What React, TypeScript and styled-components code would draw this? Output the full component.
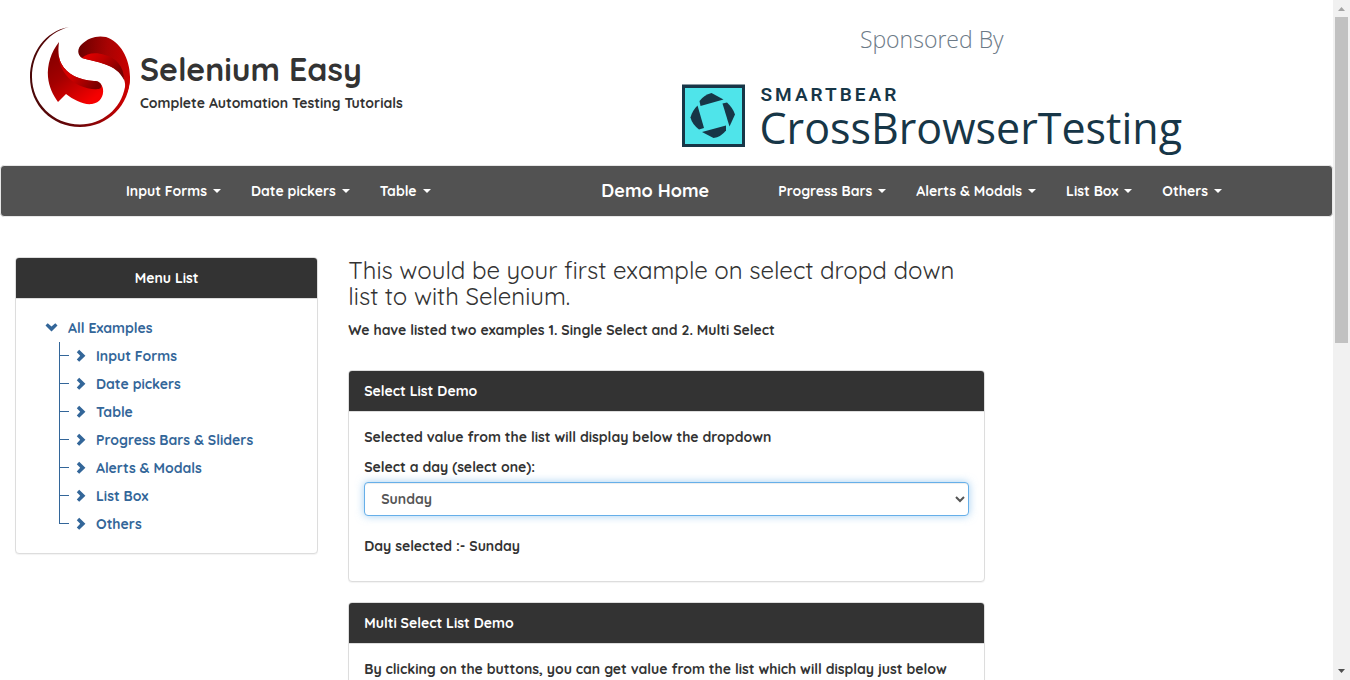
import React, { useState } from 'react';
import styled, { createGlobalStyle, css } from 'styled-components';

const GlobalStyle = createGlobalStyle`
  *, *::before, *::after { box-sizing: border-box; }
  body {
    margin: 0;
    background: #fff;
    color: #333;
    font: 700 14px/20px Quicksand, Inter, "Liberation Sans", sans-serif;
  }
  h1, h3, p, ul { margin: 0; padding: 0; font-weight: inherit; }
  ul { list-style: none; }
  a { color: inherit; text-decoration: none; }
`;

const Shell = styled.div`
  display: grid;
  grid-template-columns: minmax(0, 1fr) 17px;
  height: 100vh;
  overflow: hidden;
`;

const Page = styled.div`
  min-width: 0;
  overflow: hidden;
`;

const ScrollTrack = styled.div`
  display: flex;
  flex-direction: column;
  align-items: center;
  background: #f1f1f1;
`;

const ScrollArrow = styled.svg`
  display: block;
  flex: none;
  width: 17px;
  height: 17px;
`;

const ScrollThumb = styled.div`
  width: 13px;
  height: 48%;
  flex: none;
  background: #c1c1c1;
`;

const ScrollSpace = styled.div`
  flex: 1;
`;

const Header = styled.header`
  display: grid;
  grid-template-columns: 1fr 1fr;
  height: 165px;
`;

const Brand = styled.a`
  display: flex;
  align-items: flex-start;
  gap: 10px;
  padding: 27px 0 0 30px;
`;

const BrandText = styled.div`
  padding-top: 24px;
`;

const BrandTitle = styled.h1`
  margin-bottom: 6px;
  font-size: 32px;
  line-height: 36px;
  font-weight: 700;
`;

const Sponsor = styled.div`
  display: flex;
  flex-direction: column;
  align-items: flex-start;
  padding: 24px 15px 0;
  font-family: "Open Sans", "Noto Sans", sans-serif;
  color: #173647;
`;

const SponsorInner = styled.a`
  display: grid;
  justify-items: center;
  gap: 30px;
`;

const SponsorCaption = styled.span`
  font-size: 23px;
  line-height: 30px;
  font-weight: 300;
  color: #6c7a87;
`;

const SponsorLogo = styled.span`
  display: flex;
  gap: 15px;
`;

const SponsorNames = styled.span`
  display: flex;
  flex-direction: column;
`;

const SponsorCompany = styled.span`
  padding-left: 1px;
  font-family: Roboto, "Open Sans", sans-serif;
  font-size: 19px;
  line-height: 22px;
  font-weight: 600;
  letter-spacing: 3px;
`;

const SponsorProduct = styled.span`
  font-size: 43px;
  line-height: 44px;
  font-weight: 400;
`;

const NavBar = styled.nav`
  display: flex;
  align-items: center;
  min-height: 52px;
  padding: 0 95px 0 110px;
  margin-bottom: 40px;
  border: 1px solid #e7e7e7;
  border-radius: 4px;
  background: #525252;
  color: #fff;
`;

const NavGroup = styled.ul`
  display: flex;
`;

const NavLink = styled.a`
  display: flex;
  align-items: center;
  gap: 6px;
  padding: 15px;
  white-space: nowrap;
`;

const HomeLink = styled.a`
  margin: 0 39px 0 auto;
  padding: 15px;
  font-size: 18px;
  white-space: nowrap;
`;

const Caret = styled.span`
  border-top: 4px solid currentColor;
  border-left: 4px solid transparent;
  border-right: 4px solid transparent;
`;

const Columns = styled.div`
  display: grid;
  grid-template-columns: 1fr 2fr 1fr;
  align-items: start;
`;

const Column = styled.div`
  min-width: 0;
  padding: 0 15px;
`;

const Panel = styled.section`
  margin-bottom: 20px;
  border: 1px solid #ddd;
  border-radius: 4px;
  background: #fff;
  box-shadow: 0 1px 1px rgba(0, 0, 0, 0.05);
`;

const PanelHeading = styled.div<{ $centered?: boolean }>`
  padding: 10px 15px;
  border-bottom: 1px solid #ddd;
  border-radius: 3px 3px 0 0;
  background: #333;
  color: #fff;
  text-align: ${(p) => (p.$centered ? 'center' : 'left')};
`;

const PanelBody = styled.div`
  padding: 15px;
`;

const Tree = styled.div`
  padding-left: 14px;
  color: #369;
`;

const TreeLink = styled.a`
  display: flex;
  align-items: center;
  height: 28px;
`;

const TreeRoot = styled(TreeLink)`
  gap: 9px;
`;

const TreeList = styled.ul`
  padding-left: 14px;
`;

const TreeItem = styled.li`
  display: flex;
`;

const TreeLeaf = styled(TreeLink)`
  gap: 7px;
  padding-left: 7px;
`;

const Branch = styled.span<{ $last: boolean }>`
  width: 10px;
  &::before, &::after {
    content: '';
    display: block;
    height: 14px;
    border-left: 1px solid #369;
  }
  &::before { border-bottom: 1px solid #369; }
  ${(p) => p.$last && css`&::after { border-left-color: transparent; }`}
`;

const Lead = styled.h3`
  margin-bottom: 11px;
  font-size: 24px;
  line-height: 26px;
  font-weight: 400;
`;

const Intro = styled.p`
  margin-bottom: 30px;
`;

const Text = styled.p`
  margin-bottom: 10px;
`;

const Field = styled.div`
  display: grid;
  gap: 5px;
  margin-bottom: 20px;
`;

const Select = styled.select`
  width: 100%;
  height: 34px;
  padding: 6px 12px;
  border: 1px solid #66afe9;
  border-radius: 4px;
  outline: 0;
  background: #fff;
  color: #555;
  font: inherit;
  box-shadow: inset 0 1px 1px rgba(0, 0, 0, 0.075), 0 0 8px rgba(102, 175, 233, 0.6);
`;

const SeleniumLogo = () => (
  <svg width="100" height="100" viewBox="0 0 100 100" aria-hidden="true">
    <defs>
      <linearGradient id="ring" x1="0" y1="0" x2="1" y2="0">
        <stop offset="0" stopColor="#4a0808" />
        <stop offset="0.5" stopColor="#6e0508" />
        <stop offset="1" stopColor="#d60000" />
      </linearGradient>
      <linearGradient id="hook" x1="0" y1="0.3" x2="1" y2="0.4">
        <stop offset="0" stopColor="#6d0000" />
        <stop offset="0.55" stopColor="#a80303" />
        <stop offset="1" stopColor="#c80000" />
      </linearGradient>
      <linearGradient id="band" x1="0" y1="0" x2="1" y2="0.6">
        <stop offset="0" stopColor="#e80000" />
        <stop offset="0.45" stopColor="#c00000" />
        <stop offset="1" stopColor="#760000" />
      </linearGradient>
      <linearGradient id="wing" x1="0" y1="0" x2="0.7" y2="1">
        <stop offset="0" stopColor="#780000" />
        <stop offset="0.5" stopColor="#a30000" />
        <stop offset="1" stopColor="#f60000" />
      </linearGradient>
      <linearGradient id="fold" x1="0" y1="0" x2="1" y2="0.8">
        <stop offset="0" stopColor="#b80000" />
        <stop offset="0.5" stopColor="#d90000" />
        <stop offset="1" stopColor="#7c0000" />
      </linearGradient>
    </defs>
    <path fill="url(#ring)" d="M39 0C15 4 0 26 0 50c0 28 22 50 50 50s50-22 50-50l-5-4c1 5 1 9 0 14-4 22-23 37.500-45 37.500C23 97.500 2 76 2 50 2 27 16 6 39 0z" />
    <path fill="url(#hook)" d="M52 31c-5-3-5-10 0-14 6-6 15-9 24-7 14 4 24 22 24 40 0 8-2 15-6 22 2-8 2-16-1-22-7-13-27-15-41-19z" />
    <path fill="url(#band)" d="M52 31c5-5 14-6 23-3 11 3 19 11 19 25-7-16-28-18-42-22z" />
    <path fill="url(#wing)" d="M29 15c-8 10-12 23-11 35 1 10 5 18 10 25l8-8c8 6 17 11 26 10 8-1 12-8 11-15-1-5-4-8-9-8-14-1-27-6-33-18-3-7-3-13-2-21z" />
    <path fill="url(#fold)" d="M29 15c-2 14 0 24 7 33 8 10 21 15 33 14 3-1 3-4 1-6-2-2-4-2-6-2-14-1-27-6-33-18-3-7-3-13-2-21z" />
  </svg>
);

const ApertureLogo = () => (
  <svg width="63" height="63" viewBox="0 0 63 63" aria-hidden="true">
    <rect y="0.500" width="63" height="62.500" fill="#173647" />
    <rect x="3" y="4" width="57" height="56" fill="#4fe4ea" />
    <g fill="#173647">
      <path d="M29.500 9 41.500 15.500 18.500 22 17.500 17Q22 11 29.500 9Z" />
      <path d="M40.500 19.500 45 18.500Q51 24 53 30.500L47.500 42.500Z" />
      <path d="M20 48 44 41.500v5Q39 53 31.500 54Z" />
      <path d="M15.500 21.500 22 44 17 45.500Q10 40 8.500 33.500Q10 27 15.500 21.500Z" />
    </g>
  </svg>
);

const ChevronDown = () => (
  <svg width="14" height="14" viewBox="0 0 14 14" fill="currentColor" aria-hidden="true">
    <path d="M.5 4.500 2.700 2.300 6.500 5.500l3.800-3.200 2.200 2.200-6 6z" />
  </svg>
);

const ChevronRight = () => (
  <svg width="13" height="14" viewBox="0 0 13 14" fill="currentColor" aria-hidden="true">
    <path d="M.8 3.200 3.200.8l6.200 6-6.200 6L.8 10.400 4.200 6.800z" />
  </svg>
);

const LEFT_NAV = ['Input Forms', 'Date pickers', 'Table'];
const RIGHT_NAV = ['Progress Bars', 'Alerts & Modals', 'List Box', 'Others'];
const EXAMPLES = ['Input Forms', 'Date pickers', 'Table', 'Progress Bars & Sliders', 'Alerts & Modals', 'List Box', 'Others'];
const DAYS = ['Sunday', 'Monday', 'Tuesday', 'Wednesday', 'Thursday', 'Friday', 'Saturday'];

const NavMenu = ({ items }: { items: string[] }) => (
  <NavGroup>
    {items.map((item) => (
      <li key={item}>
        <NavLink href="#">{item}<Caret /></NavLink>
      </li>
    ))}
  </NavGroup>
);

export default function App() {
  const [day, setDay] = useState('Sunday');

  return (
    <Shell>
      <GlobalStyle />
      <Page>
        <Header>
          <Brand href="#">
            <SeleniumLogo />
            <BrandText>
              <BrandTitle>Selenium Easy</BrandTitle>
              <p>Complete Automation Testing Tutorials</p>
            </BrandText>
          </Brand>
          <Sponsor>
            <SponsorInner href="#">
              <SponsorCaption>Sponsored By</SponsorCaption>
              <SponsorLogo>
                <ApertureLogo />
                <SponsorNames>
                  <SponsorCompany>SMARTBEAR</SponsorCompany>
                  <SponsorProduct>CrossBrowserTesting</SponsorProduct>
                </SponsorNames>
              </SponsorLogo>
            </SponsorInner>
          </Sponsor>
        </Header>

        <NavBar>
          <NavMenu items={LEFT_NAV} />
          <HomeLink href="#">Demo Home</HomeLink>
          <NavMenu items={RIGHT_NAV} />
        </NavBar>

        <Columns>
          <Column as="aside">
            <Panel>
              <PanelHeading $centered>Menu List</PanelHeading>
              <PanelBody>
                <Tree>
                  <TreeRoot href="#"><ChevronDown />All Examples</TreeRoot>
                  <TreeList>
                    {EXAMPLES.map((name, i) => (
                      <TreeItem key={name}>
                        <Branch $last={i === EXAMPLES.length - 1} />
                        <TreeLeaf href="#"><ChevronRight />{name}</TreeLeaf>
                      </TreeItem>
                    ))}
                  </TreeList>
                </Tree>
              </PanelBody>
            </Panel>
          </Column>

          <Column as="main">
            <Lead>This would be your first example on select dropd down list to with Selenium.</Lead>
            <Intro>We have listed two examples 1. Single Select and 2. Multi Select</Intro>
            <Panel>
              <PanelHeading>Select List Demo</PanelHeading>
              <PanelBody>
                <Text>Selected value from the list will display below the dropdown</Text>
                <Field>
                  <label htmlFor="day">Select a day (select one):</label>
                  <Select id="day" value={day} onChange={(e) => setDay(e.target.value)}>
                    {DAYS.map((d) => <option key={d}>{d}</option>)}
                  </Select>
                </Field>
                <Text>Day selected :- {day}</Text>
              </PanelBody>
            </Panel>
            <Panel>
              <PanelHeading>Multi Select List Demo</PanelHeading>
              <PanelBody>
                <Text>By clicking on the buttons, you can get value from the list which will display just below</Text>
              </PanelBody>
            </Panel>
          </Column>
        </Columns>
      </Page>

      <ScrollTrack aria-hidden="true">
        <ScrollArrow viewBox="0 0 17 17"><path fill="#a3a3a3" d="M5 11h7L8.500 7z" /></ScrollArrow>
        <ScrollThumb />
        <ScrollSpace />
        <ScrollArrow viewBox="0 0 17 17"><path fill="#505050" d="M5 6h7l-3.500 4z" /></ScrollArrow>
      </ScrollTrack>
    </Shell>
  );
}
